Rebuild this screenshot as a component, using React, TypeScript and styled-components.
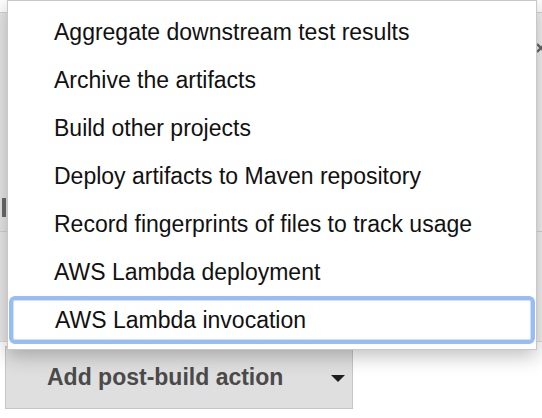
import React from 'react';
import styled, { createGlobalStyle } from 'styled-components';

const GlobalStyle = createGlobalStyle`
  html, body {
    margin: 0;
    padding: 0;
    background: #ffffff;
    font-family: "Liberation Sans", Arial, Helvetica, sans-serif;
  }
`;

const Page = styled.div`
  position: relative;
  width: 542px;
  height: 418px;
  overflow: hidden;
  display: flex;
  flex-direction: column;
`;

const Backdrop = styled.div`
  margin-top: 12px;
  height: 218px;
  border-top: 1px solid #d2d2d2;
  border-bottom: 1px solid #d2d2d2;
  background: linear-gradient(90deg, #e6e6e6 0%, #f1f1f1 100%);
  position: relative;
`;

const BackdropLower = styled.div`
  height: 109px;
  background: linear-gradient(90deg, #e8e8e8 0%, #f1f1f1 100%);
  border-bottom: 1px solid #dcdcdc;
  position: relative;
`;

const Handle = styled.div`
  position: absolute;
  left: 2px;
  top: 185px;
  width: 4px;
  height: 19px;
  background: #6b6b6b;
`;

const CloseMark = styled.svg`
  position: absolute;
  right: -5px;
  top: 29px;
`;

const Menu = styled.ul`
  position: absolute;
  top: 0;
  left: 7px;
  width: 528px;
  margin: 0;
  padding: 7px 0 5px;
  list-style: none;
  background: #ffffff;
  border: 1px solid #c8c8c8;
  box-shadow: 0 6px 18px rgba(0, 0, 0, 0.25);
  z-index: 5;
`;

const Item = styled.li<{ $active?: boolean }>`
  height: 48px;
  box-sizing: border-box;
  display: flex;
  align-items: center;
  padding-left: ${(p) => (p.$active ? '42px' : '46px')};
  margin: ${(p) => (p.$active ? '0 1px 0 1px' : '0')};
  font-size: 23px;
  color: #111111;
  border: ${(p) => (p.$active ? '4px solid #98bdf6' : 'none')};
  border-radius: ${(p) => (p.$active ? '6px' : '0')};
  box-shadow: ${(p) => (p.$active ? 'inset 0 0 0 1px #cfe0fb' : 'none')};
`;

const Footer = styled.div`
  padding: 4px 0 0 5px;
`;

const ActionButton = styled.button`
  width: 348px;
  height: 63px;
  box-sizing: border-box;
  display: flex;
  align-items: center;
  padding: 0 0 0 41px;
  background: #dfdfdf;
  border: 1px solid #c6c6c6;
  border-radius: 0;
  font-family: "Liberation Sans", Arial, sans-serif;
  font-size: 23px;
  font-weight: 700;
  color: #4a4a4a;
`;

const Caret = styled.span`
  margin-left: 48px;
  margin-top: 2px;
  width: 0;
  height: 0;
  border-left: 7px solid transparent;
  border-right: 7px solid transparent;
  border-top: 7px solid #1e1e1e;
`;

const items = [
  'Aggregate downstream test results',
  'Archive the artifacts',
  'Build other projects',
  'Deploy artifacts to Maven repository',
  'Record fingerprints of files to track usage',
  'AWS Lambda deployment',
  'AWS Lambda invocation',
];

export default function App() {
  return (
    <Page>
      <GlobalStyle />
      <Backdrop>
        <Handle />
        <CloseMark width="12" height="12" viewBox="0 0 12 12">
          <path d="M2 2 L10 10 M10 2 L2 10" stroke="#666" strokeWidth="2.4" />
        </CloseMark>
      </Backdrop>
      <BackdropLower />
      <Menu>
        {items.map((label, i) => (
          <Item key={label} $active={i === items.length - 1}>
            {label}
          </Item>
        ))}
      </Menu>
      <Footer>
        <ActionButton>
          Add post-build action
          <Caret />
        </ActionButton>
      </Footer>
    </Page>
  );
}
